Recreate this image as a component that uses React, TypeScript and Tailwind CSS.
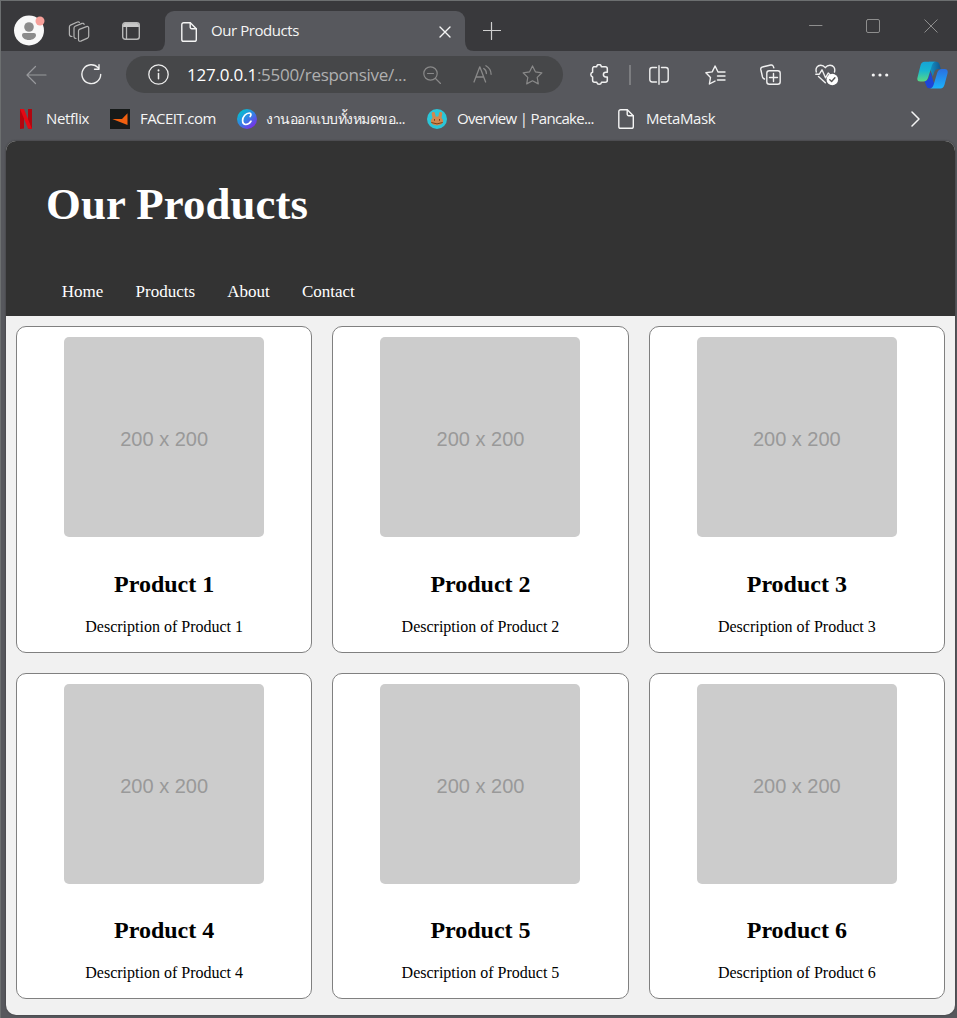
import type { ReactNode } from 'react';

type IconProps = { w: number; h: number; className?: string; children: ReactNode; sw?: number };

function Icon({ w, h, className = '', children, sw = 1.2 }: IconProps) {
  return (
    <svg
      width={w}
      height={h}
      viewBox={`0 0 ${w} ${h}`}
      fill="none"
      stroke="currentColor"
      strokeWidth={sw}
      strokeLinecap="round"
      strokeLinejoin="round"
      className={`shrink-0 ${className}`}
    >
      {children}
    </svg>
  );
}

function FileIcon({ className = '' }: { className?: string }) {
  return (
    <Icon w={16} h={20} sw={1.4} className={className}>
      <path d="M2.7.8h6.6l6 6v10.6a1.9 1.9 0 0 1-1.9 1.9H2.7A1.9 1.9 0 0 1 .8 17.400V2.700A1.900 1.900 0 0 1 2.700.8Z" />
      <path d="M9.200 1v4.300a1.500 1.500 0 0 0 1.500 1.500h4.500" />
    </Icon>
  );
}

function TabStrip() {
  return (
    <div className="flex h-[50px] shrink-0 items-start bg-[#39393c]">
      <svg width="32" height="32" viewBox="0 0 32 32" className="ml-[13px] mt-[14px] shrink-0">
        <circle cx="15" cy="15.500" r="15" fill="#f8f8f8" />
        <circle cx="15" cy="12" r="4.800" fill="#8b8b8b" />
        <path d="M10.200 18h9.700a2.100 2.100 0 0 1 2.100 2.100c0 2.700-2.900 5-7 5s-7-2.300-7-5A2.100 2.100 0 0 1 10.200 18Z" fill="#8b8b8b" />
        <circle cx="26" cy="6" r="4.500" fill="#f7a09a" />
      </svg>
      <Icon w={22} h={22} sw={1.200} className="ml-[22px] mt-5 text-[#b4b4b4]">
        <path d="M11.300 8.400 18.500 5.600q2.200-.6 2.200 1.500v8.200q0 1.200-1.200 1.800l-6.700 3q-2.300.7-2.300-1.500V9.900q0-1 .8-1.500Z" />
        <path d="M8 17.500q-2-.1-2-1.800V7q0-1.200 1.100-1.700l6.900-2.900q1.700-.5 2.100 1" />
        <path d="M4 15.500q-2.600 0-2.600-1.900V5.800q0-1.200 1.100-1.700L9.400 1q1.300-.5 2 .4" />
      </Icon>
      <svg width="18" height="18" viewBox="0 0 18 18" className="ml-8 mt-[21px] shrink-0">
        <path d="M1 5V3.200A2.200 2.200 0 0 1 3.200 1h11.600A2.200 2.200 0 0 1 17 3.200V5Z" fill="#c8c8c8" />
        <rect x=".7" y=".7" width="16.600" height="16.600" rx="2.500" fill="none" stroke="#b8b8b8" strokeWidth="1.400" />
        <path d="M4.500 5v12" stroke="#b8b8b8" strokeWidth="1.300" />
      </svg>
      <svg width="9" height="10" viewBox="0 0 9 10" className="ml-4 mt-10 shrink-0">
        <path d="M9 0v10H0q9 0 9-10Z" fill="#57585d" />
      </svg>
      <div className="mt-[10px] flex h-10 w-[300px] shrink-0 items-center rounded-t-[9px] bg-[#57585d] pl-4 pr-[14px] text-[#f5f5f5]">
        <FileIcon className="mt-px" />
        <span className="ml-[14px] flex-1 whitespace-nowrap pb-[2px] text-[15px] tracking-[-0.43px]">Our Products</span>
        <Icon w={12} h={12} sw={1.400} className="mt-[2px]">
          <path d="m1 1 10 10M11 1 1 11" />
        </Icon>
      </div>
      <svg width="9" height="10" viewBox="0 0 9 10" className="mt-10 shrink-0">
        <path d="M0 0v10h9Q0 10 0 0Z" fill="#57585d" />
      </svg>
      <Icon w={18} h={18} className="ml-[9px] mt-[21px] text-[#cfcfcf]">
        <path d="M8.500.5v17M.5 8.500h17" />
      </Icon>
      <div className="ml-auto mr-[19px] mt-[18px] flex items-start text-[#8e8e8e]">
        <Icon w={14} h={14} sw={1}>
          <path d="M.5 6.500h12.500" />
        </Icon>
        <Icon w={14} h={14} sw={1} className="ml-[43px]">
          <rect x=".5" y=".5" width="13" height="13" rx="1.500" />
        </Icon>
        <Icon w={14} h={14} sw={1} className="ml-[44px]">
          <path d="m.8.8 12.400 12.400M13.200.8.8 13.200" />
        </Icon>
      </div>
    </div>
  );
}

function AddressBar() {
  return (
    <div className="ml-6 flex h-[37px] w-[437px] shrink-0 items-center rounded-full bg-[#464749]">
      <Icon w={21} h={21} sw={1.300} className="ml-[22px] text-[#eeeeee]">
        <circle cx="10.500" cy="10.500" r="9.700" />
        <path d="M10.500 9.500v5.300" strokeWidth="1.500" />
        <path d="M10.500 6.300v.2" strokeWidth="1.900" />
      </Icon>
      <div className="ml-[18px] w-[223px] shrink-0 whitespace-nowrap text-[17px] tracking-[-0.29px] text-[#b0b0b0]">
        <span className="tracking-[-0.2px] text-white">127.0.0.1</span>:5500/responsive/...
      </div>
      <Icon w={18} h={18} className="ml-[13px] text-[#898989]">
        <circle cx="7.500" cy="7.500" r="6.700" />
        <path d="M4.500 7.500h6M12.500 12.500l5 5" />
      </Icon>
      <Icon w={20} h={18} sw={1.300} className="ml-8 -mt-px text-[#898989]">
        <path d="m1 17 5.800-15.200L12.600 17M3 12h7.600M10.700 3.500a6 6 0 0 1 2.700 5M12.900.8a10 10 0 0 1 5.200 8.500" />
      </Icon>
      <Icon w={21} h={20} className="ml-[29px] text-[#898989]">
        <path d="m10.500.9 2.900 5.900 6.500 1-4.700 4.600 1.100 6.500-5.800-3.100-5.800 3.100 1.100-6.500L1.100 7.800l6.500-1Z" />
      </Icon>
    </div>
  );
}

function CopilotIcon() {
  return (
    <svg width="31" height="28" viewBox="0 0 31 28" className="ml-[28px] shrink-0">
      <defs>
        <linearGradient id="cpA" x1="0" y1="0" x2="0" y2="1">
          <stop offset="0" stopColor="#16a4d6" />
          <stop offset=".45" stopColor="#18b5d0" />
          <stop offset="1" stopColor="#5ad982" />
        </linearGradient>
        <linearGradient id="cpB" x1="0" y1="0" x2="0" y2="1">
          <stop offset="0" stopColor="#2a6fe0" />
          <stop offset="1" stopColor="#1cb2fb" />
        </linearGradient>
        <linearGradient id="cpC" x1="0" y1="0" x2="1" y2="0">
          <stop offset="0" stopColor="#1597ca" />
          <stop offset="1" stopColor="#12578f" />
        </linearGradient>
      </defs>
      <path d="M12 .8h7q2.800 0 3.600 3l1.200 4.200h-2.500q-3 0-4 3l-1.500 4.500L12 5Z" fill="url(#cpC)" />
      <path d="M7.500 20q3 0 4-3l2-6 4 13-3.500 3.200h-1.500q-2.500 0-3.300-2.800Z" fill="#1d45d8" />
      <path d="M7.500.8H19q-3 0-4.200 4l-3.700 12q-1.100 3.700-4.700 3.700H3.300Q-.5 20.500.5 16.500L3.500 4.500Q4.500.8 7.500.8Z" fill="url(#cpA)" />
      <path d="M23.500 27.400H12.500q3 0 4.200-4l3.600-11.900q1.200-3.500 4.700-3.500h2.700q3.800.2 2.800 4.500l-3 11.200q-1 3.700-4 3.700Z" fill="url(#cpB)" />
    </svg>
  );
}

function Toolbar() {
  return (
    <div className="flex h-[47px] shrink-0 items-center pl-6 text-[#f0f0f0]">
      <Icon w={22} h={20} className="text-[#98999c]">
        <path d="M10.500 1.500 2 10l8.500 8.500M2 10h19" />
      </Icon>
      <Icon w={21} h={21} sw={1.400} className="ml-[34px]">
        <path d="M17.300 3.900A9.400 9.400 0 1 0 19.700 10.500M18 .8v4.400h-4.500" />
      </Icon>
      <AddressBar />
      <Icon w={20} h={21} sw={1.500} className="ml-[26px]">
        <path d="M4.500 2.800h3.200a2.300 2.300 0 0 1 4.600 0h4a2 2 0 0 1 2 2v3.400h-1.500a2.400 2.400 0 0 0 0 4.800h1.500v3.300a2 2 0 0 1-2 2h-3.800a2.400 2.400 0 0 1-4.700 0H5.600a2 2 0 0 1-2-2V13a2.500 2.500 0 0 1 0-4.800V4.800q0-1.500.9-2Z" />
      </Icon>
      <div className="ml-5 h-5 w-[2px] shrink-0 bg-[#7c7d80]" />
      <Icon w={20} h={20} sw={1.400} className="ml-[18px]">
        <path d="M7.500 2.500H3.200a2.400 2.400 0 0 0-2.400 2.400v9.700A2.400 2.400 0 0 0 3.200 17h4.300M12.500 2.500h4.300a2.400 2.400 0 0 1 2.400 2.400v9.700a2.400 2.400 0 0 1-2.400 2.400h-4.300M10 .7v18.600" />
      </Icon>
      <Icon w={21} h={20} sw={1.400} className="ml-9">
        <path d="M13 7 10.100 1 7.200 6.900l-6.300.9 4.600 4.600-1.100 6.600L10 16.100M13 7h7M12.500 11h7.500M12.500 15h7.500" />
      </Icon>
      <Icon w={21} h={21} sw={1.400} className="ml-[34px]">
        <rect x="6.800" y="6.800" width="13.400" height="13.400" rx="2.500" />
        <path d="M13.500 9.500v8M9.500 13.500h8M4.500 15q-1.500-.5-2-2L.8 5.500Q.4 3.500 2.300 3l8.500-2q1.900-.4 2.500 1.400l.5 1.400" />
      </Icon>
      <svg width="24" height="22" viewBox="0 0 24 22" className="ml-[34px] shrink-0" fill="none" stroke="#f0f0f0" strokeWidth="1.400" strokeLinejoin="round" strokeLinecap="round">
        <path d="M1.300 8C.2 4.200 2.500 1.200 5.700 1.200c2.200 0 3.600 1.100 4.600 2.500 1-1.400 2.500-2.500 4.700-2.500 3.500 0 5.500 3 4.500 6.800M3.500 12.500l6.800 6.300M.8 10.200h3.500L7 5.800l3.500 8 2.700-4.800 1.500 1.500" />
        <circle cx="17.300" cy="15.500" r="5.800" fill="#fff" stroke="none" />
        <path d="m14.800 15.800 1.800 1.700 3.300-3.700" stroke="#555" />
      </svg>
      <svg width="18" height="4" viewBox="0 0 18 4" fill="#f4f4f4" className="ml-[32px] shrink-0">
        <circle cx="2.300" cy="2" r="1.600" />
        <circle cx="9" cy="2" r="1.600" />
        <circle cx="15.700" cy="2" r="1.600" />
      </svg>
      <CopilotIcon />
    </div>
  );
}

function BookmarksBar() {
  return (
    <div className="flex h-[43px] shrink-0 items-center whitespace-nowrap pb-[2px] pl-[18px] text-[15px] text-[#f5f5f5]">
      <svg width="14" height="20" viewBox="0 0 14 20" className="shrink-0">
        <path d="M1 0h4v19.500l-4 .5ZM9 0h4v20l-4-.5Z" fill="#b1060f" />
        <path d="M1 0h4l8 20-4-.5Z" fill="#e50914" />
      </svg>
      <span className="ml-[13px] w-[64px] tracking-[-0.35px]">Netflix</span>
      <svg width="20" height="20" viewBox="0 0 20 20" className="shrink-0">
        <path d="M0 0h20v20H0z" fill="#161a19" />
        <path d="M17.500 4.200V16L2.300 10.100H12Z" fill="#f06010" />
      </svg>
      <span className="ml-[10px] w-[97px] tracking-[-0.58px]">FACEIT.com</span>
      <svg width="20" height="20" viewBox="0 0 20 20" className="shrink-0">
        <defs>
          <linearGradient id="cv" x1=".1" y1=".1" x2=".8" y2=".95">
            <stop offset="0" stopColor="#00c4cc" />
            <stop offset=".5" stopColor="#3482e6" />
            <stop offset="1" stopColor="#7d2ae8" />
          </linearGradient>
        </defs>
        <circle cx="10" cy="10" r="10" fill="url(#cv)" />
        <path d="M13.200 7.500c1.200-1.500 1-3.500-.8-3.500C9 4 5.600 7.500 5.600 11.600c0 2.500 1.300 3.900 3.200 3.900 2.300 0 4.200-1.500 5.200-3.300" fill="none" stroke="#fff" strokeWidth="1.700" strokeLinecap="round" />
      </svg>
      <span className="ml-[9px] w-[161px] text-[14px] tracking-[-0.48px]">งานออกแบบทั้งหมดขอ...</span>
      <svg width="20" height="20" viewBox="0 0 20 20" className="shrink-0">
        <circle cx="10" cy="10" r="10" fill="#2bc6d8" />
        <path d="M5.500 9 4.700 4.700c-.2-1.800 2.900-2.300 3.300-.4l.7 3.200h2.600l.7-3.200c.4-1.900 3.500-1.400 3.300.4L14.500 9c1 .9 1.700 1.900 1.700 3 0 2.700-2.800 4.400-6.200 4.400S3.800 14.700 3.800 12c0-1.100.7-2.100 1.700-3Z" fill="#d1884f" />
        <path d="M7.500 10v1.800M12.500 10v1.800M4.300 13.500q5.700 2.800 11.400 0" stroke="#7a4318" strokeWidth="1" fill="none" />
      </svg>
      <span className="ml-[10px] w-[161px] tracking-[-0.69px]">Overview | Pancake...</span>
      <FileIcon />
      <span className="ml-3 tracking-[-0.42px]">MetaMask</span>
      <Icon w={9} h={16} sw={1.500} className="ml-auto mr-[37px]">
        <path d="m1 1 7 7-7 7" />
      </Icon>
    </div>
  );
}

const navItems = ['Home', 'Products', 'About', 'Contact'];
const products = [1, 2, 3, 4, 5, 6];

function ProductCard({ id }: { id: number }) {
  return (
    <article className="flex h-[326.500px] flex-col items-center rounded-[10px] border border-[#808080] bg-white pt-[10px] text-black">
      <div className="flex size-[200px] items-center justify-center rounded-[5px] bg-[#cccccc] pt-[4px] font-['Liberation_Sans',sans-serif] text-[20px] text-[#999999]">
        200 x 200
      </div>
      <h2 className="mt-[32.700px] text-[24px] font-bold leading-7">Product {id}</h2>
      <p className="mt-5 text-[16px] leading-[18px]">Description of Product {id}</p>
    </article>
  );
}

function ProductPage() {
  return (
    <main className="ml-[5px] mr-[2px] h-[874px] shrink-0 overflow-hidden rounded-[10px] bg-[#f1f1f1] font-['Liberation_Serif',serif] shadow-[0_0_2px_#333]">
      <header className="flex h-[175px] flex-col bg-[#333333] pl-10 text-white">
        <h1 className="mt-[37px] text-[44.800px] font-bold leading-[52px] tracking-[0.08px]">Our Products</h1>
        <nav className="ml-[15.800px] mt-[52px] flex gap-[32.200px] text-[17px] leading-5">
          {navItems.map((item) => (
            <a key={item}>{item}</a>
          ))}
        </nav>
      </header>
      <section className="grid grid-cols-3 gap-5 p-[10px]">
        {products.map((id) => (
          <ProductCard key={id} id={id} />
        ))}
      </section>
    </main>
  );
}

export default function App() {
  return (
    <div className="flex h-[1018px] w-[957px] flex-col overflow-hidden border-l border-t border-[#6c6f70] bg-[#57585d] font-['Open_Sans','Noto_Sans',sans-serif]">
      <TabStrip />
      <Toolbar />
      <BookmarksBar />
      <ProductPage />
    </div>
  );
}
